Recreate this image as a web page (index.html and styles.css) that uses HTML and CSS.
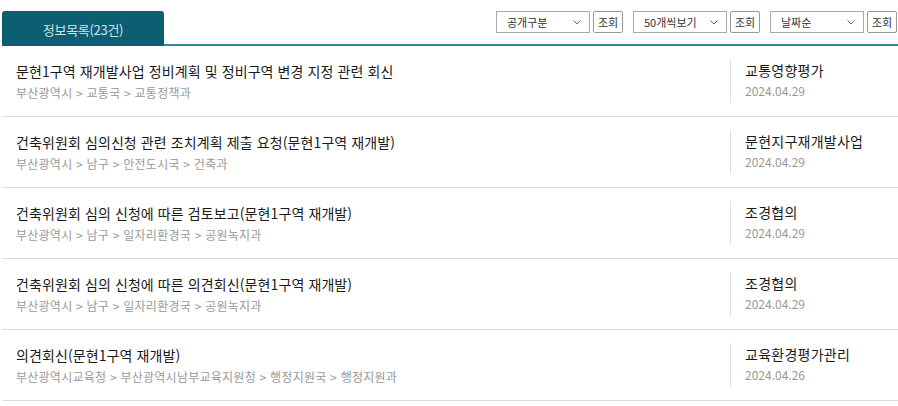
FILE: index.html
```html
<!DOCTYPE html>
<html lang="ko">
<head>
<meta charset="utf-8">
<link rel="stylesheet" href="styles.css">
</head>
<body>
<div class="page">
  <div class="head">
    <div class="tab">정보목록(23건)</div>
    <div class="tools">
      <div class="sel"><span>공개구분</span><svg viewBox="0 0 8 5" width="8" height="5"><path d="M0.5 0.5 L4 4 L7.5 0.5" fill="none" stroke="#666" stroke-width="1"/></svg></div>
      <button class="btn">조회</button>
      <div class="sel sp"><span>50개씩보기</span><svg viewBox="0 0 8 5" width="8" height="5"><path d="M0.5 0.5 L4 4 L7.5 0.5" fill="none" stroke="#666" stroke-width="1"/></svg></div>
      <button class="btn">조회</button>
      <div class="sel sp"><span>날짜순</span><svg viewBox="0 0 8 5" width="8" height="5"><path d="M0.5 0.5 L4 4 L7.5 0.5" fill="none" stroke="#666" stroke-width="1"/></svg></div>
      <button class="btn">조회</button>
    </div>
  </div>
  <ul class="list">
    <li class="row">
      <div class="main"><div class="title">문현1구역 재개발사업 정비계획 및 정비구역 변경 지정 관련 회신</div><div class="path">부산광역시 &gt; 교통국 &gt; 교통정책과</div></div>
      <div class="side"><div class="cat">교통영향평가</div><div class="date">2024.04.29</div></div>
    </li>
    <li class="row">
      <div class="main"><div class="title">건축위원회 심의신청 관련 조치계획 제출 요청(문현1구역 재개발)</div><div class="path">부산광역시 &gt; 남구 &gt; 안전도시국 &gt; 건축과</div></div>
      <div class="side"><div class="cat">문현지구재개발사업</div><div class="date">2024.04.29</div></div>
    </li>
    <li class="row">
      <div class="main"><div class="title">건축위원회 심의 신청에 따른 검토보고(문현1구역 재개발)</div><div class="path">부산광역시 &gt; 남구 &gt; 일자리환경국 &gt; 공원녹지과</div></div>
      <div class="side"><div class="cat">조경협의</div><div class="date">2024.04.29</div></div>
    </li>
    <li class="row">
      <div class="main"><div class="title">건축위원회 심의 신청에 따른 의견회신(문현1구역 재개발)</div><div class="path">부산광역시 &gt; 남구 &gt; 일자리환경국 &gt; 공원녹지과</div></div>
      <div class="side"><div class="cat">조경협의</div><div class="date">2024.04.29</div></div>
    </li>
    <li class="row">
      <div class="main"><div class="title">의견회신(문현1구역 재개발)</div><div class="path">부산광역시교육청 &gt; 부산광역시남부교육지원청 &gt; 행정지원국 &gt; 행정지원과</div></div>
      <div class="side"><div class="cat">교육환경평가관리</div><div class="date">2024.04.26</div></div>
    </li>
  </ul>
</div>
</body>
</html>
```
FILE: styles.css
```css
* { box-sizing: border-box; }
html, body { margin: 0; padding: 0; background: #fff; }
body { font-family: "Noto Sans CJK KR", "Noto Sans", sans-serif; color: #222; }
.page { padding: 11px 0 0 2px; }
.head {
  display: flex;
  justify-content: space-between;
  align-items: flex-start;
  border-bottom: 2px solid #2b8aa0;
  height: 35px;
}
.tab {
  width: 162px;
  height: 35px;
  background: #0c5f71;
  color: #cfe2e8;
  font-size: 13px;
  letter-spacing: -0.3px;
  display: flex;
  align-items: center;
  justify-content: center;
  border-radius: 3px 3px 0 0;
  padding-top: 1px;
  margin-bottom: -2px;
}
.tools { display: flex; align-items: center; gap: 3px; padding-right: 1px; }
.sel {
  width: 94px;
  height: 22px;
  border: 1px solid #aaa;
  display: flex;
  align-items: center;
  justify-content: space-between;
  padding: 0 8px 0 10px;
  font-size: 11px;
  color: #333;
}
.sel svg { display: block; }
.sel.sp { margin-left: 7px; }
.btn {
  width: 30px;
  height: 22px;
  border: 1px solid #999;
  border-radius: 2px;
  background: #fff;
  font-family: inherit;
  font-size: 11px;
  color: #333;
  padding: 0;
  display: flex;
  align-items: center;
  justify-content: center;
}
.list { list-style: none; margin: 0; padding: 0; }
.row {
  display: flex;
  align-items: center;
  border-bottom: 1px solid #ddd;
  height: 71px;
}
.main { flex: 1; padding-left: 14px; }
.title { font-size: 14px; line-height: 20px; letter-spacing: 0.1px; color: #1a1a1a; }
.path { font-size: 12px; line-height: 18px; margin-top: 3px; letter-spacing: 0.25px; color: #999; }
.side {
  width: 168px;
  border-left: 1px solid #ddd;
  padding-left: 14px;
  height: 44px;
  margin-bottom: 1px;
  display: flex;
  flex-direction: column;
  justify-content: center;
}
.cat { font-size: 14px; line-height: 20px; letter-spacing: 0.25px; color: #1a1a1a; margin-top: -2px; }
.date { font-size: 12px; line-height: 18px; margin-top: 2px; letter-spacing: 0; color: #999; }
```
